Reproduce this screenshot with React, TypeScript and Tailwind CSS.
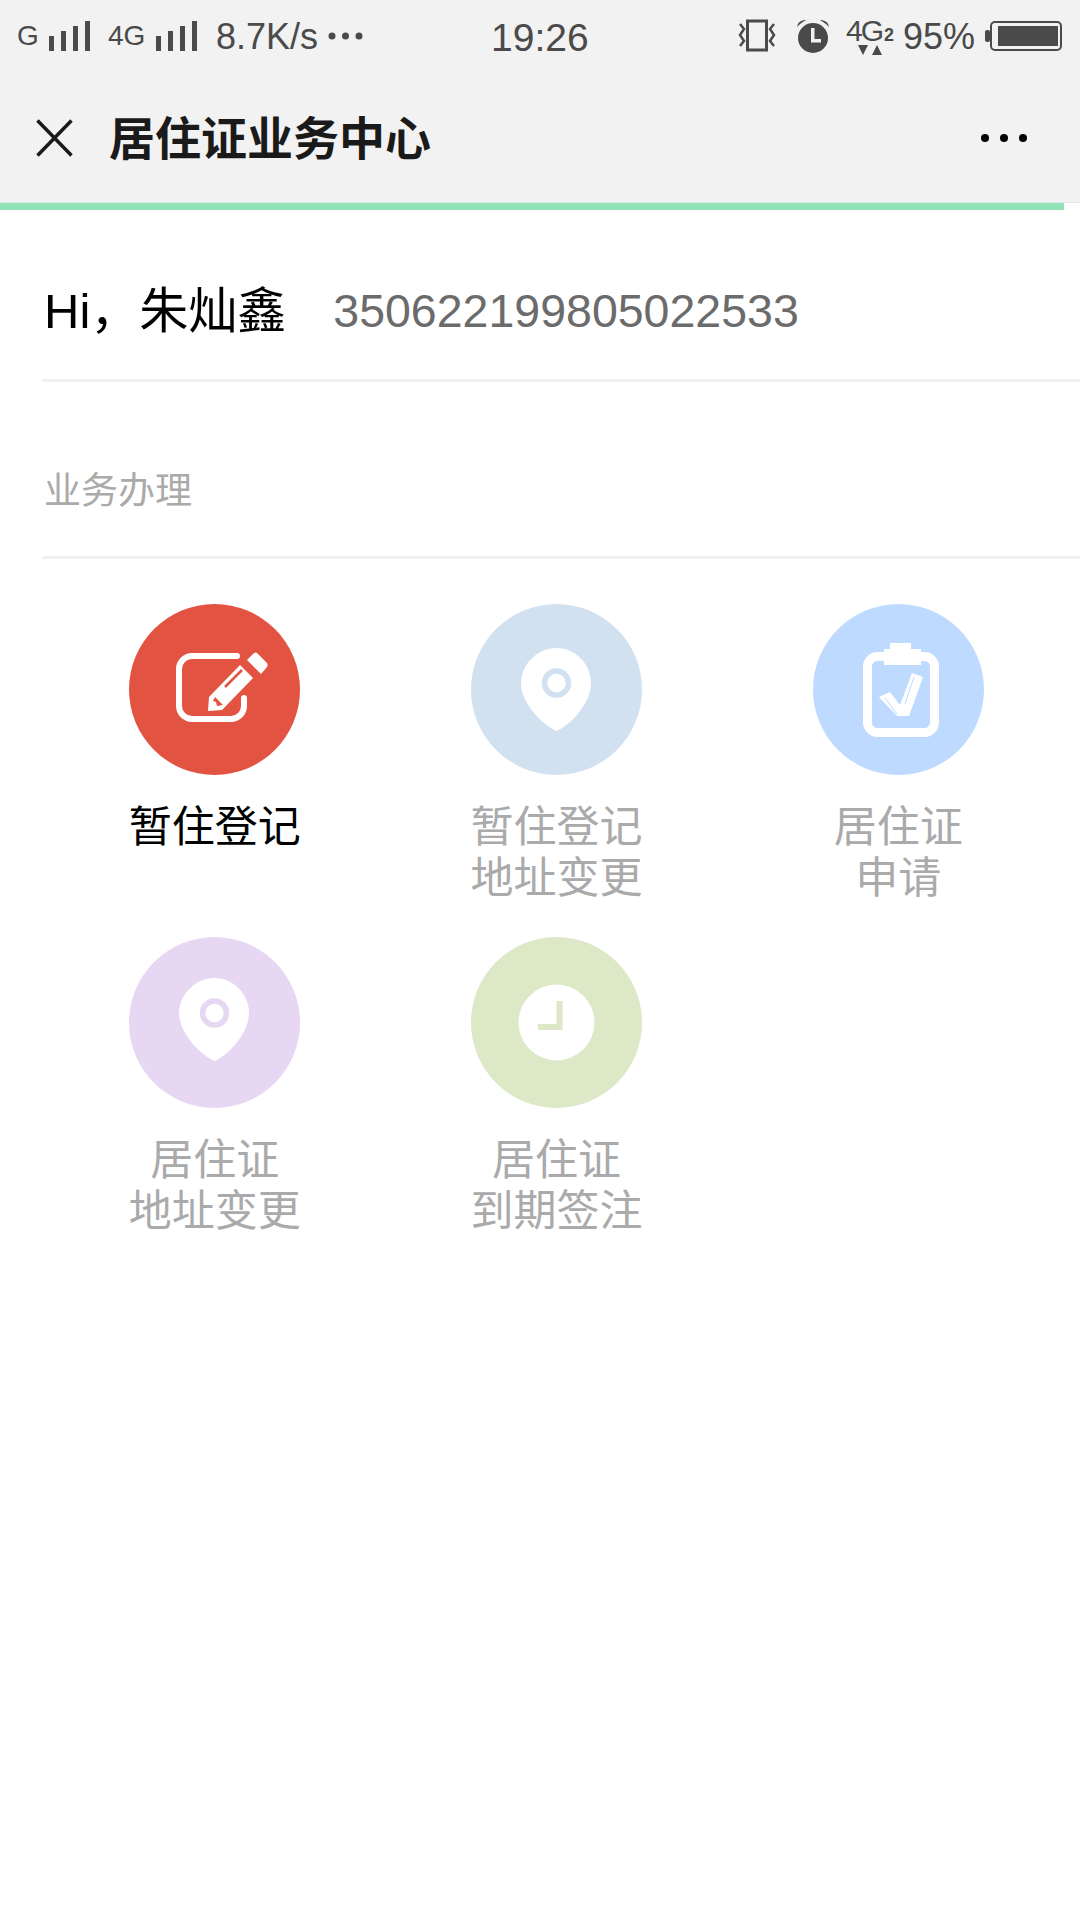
const cjk = "font-['Liberation_Sans','Noto_Sans_CJK_SC',sans-serif]"

function Signal() {
  return (
    <svg width="41" height="32" viewBox="0 0 41 32" className="block">
      <rect x="0" y="16" width="5" height="15" fill="#4a4a4a" />
      <rect x="12" y="11" width="5" height="20" fill="#4a4a4a" />
      <rect x="24" y="6" width="5" height="25" fill="#4a4a4a" />
      <rect x="36" y="1" width="5" height="30" fill="#4a4a4a" />
    </svg>
  )
}

function StatusBar() {
  return (
    <div className="h-[70px] pt-[2px] flex items-center text-[#4a4a4a] font-['Liberation_Sans',sans-serif]">
      <span className="ml-[17px] w-[20px] text-[28px] leading-none">G</span>
      <span className="ml-[12px]"><Signal /></span>
      <span className="ml-[18px] w-[37px] text-[28px] leading-none">4G</span>
      <span className="ml-[11px]"><Signal /></span>
      <span className="ml-[19px] w-[102px] text-[36px] leading-none whitespace-nowrap mt-[2px]">8.7K/s</span>
      <svg width="35" height="10" viewBox="0 0 35 10" className="ml-[10px]">
        <circle cx="4" cy="5" r="3.500" fill="#4a4a4a" />
        <circle cx="17.500" cy="5" r="3.500" fill="#4a4a4a" />
        <circle cx="31" cy="5" r="3.500" fill="#4a4a4a" />
      </svg>
      <span className="ml-[128px] w-[99px] text-[39px] leading-none mt-[2px]">19:26</span>
      {/* vibrate */}
      <svg width="38" height="34" viewBox="0 0 38 34" className="ml-[148px]">
        <rect x="9.500" y="2" width="19" height="29" fill="none" stroke="#4a4a4a" strokeWidth="3" />
        <path d="M2 5l4 5-4 6 4 6-4 5M36 5l-4 5 4 6-4 6 4 5" fill="none" stroke="#4a4a4a" strokeWidth="2.500" />
      </svg>
      {/* alarm */}
      <svg width="34" height="34" viewBox="0 0 34 34" className="ml-[20px]">
        <circle cx="17" cy="19" r="15" fill="#4a4a4a" />
        <path d="M1 8C2 3 5 1 10 1 6 3 3 6 1 8zM33 8C32 3 29 1 24 1 28 3 31 6 33 8z" fill="#4a4a4a" />
        <path d="M15 9h3.500v11H25v3.500H15z" fill="#f2f2f2" />
      </svg>
      <div className="ml-[16px] w-[48px] h-[40px] relative">
        <span className="absolute left-0 top-0 text-[30px] leading-[30px] tracking-[-2px]">4G</span>
        <span className="absolute left-[38px] top-[10px] text-[18px] leading-[18px] font-bold">2</span>
        <svg width="24" height="11" viewBox="0 0 24 11" className="absolute left-[12px] top-[29px]">
          <path d="M0 0h10L5 10zM14 10h10L19 0z" fill="#4a4a4a" />
        </svg>
      </div>
      <span className="ml-[9px] w-[72px] text-[36px] leading-none whitespace-nowrap mt-[2px]">95%</span>
      {/* battery */}
      <svg width="77" height="32" viewBox="0 0 77 32" className="ml-[10px]">
        <rect x="0" y="10" width="5" height="12" rx="2" fill="#4a4a4a" />
        <rect x="6" y="2" width="70" height="28" rx="4" fill="none" stroke="#4a4a4a" strokeWidth="2" />
        <rect x="13" y="6" width="60" height="20" fill="#4a4a4a" />
      </svg>
    </div>
  )
}

function NavBar() {
  return (
    <div className="h-[132px] flex items-center">
      <svg width="37" height="38" viewBox="0 0 37 38" className="ml-[36px] mt-[4px]">
        <path d="M1.500 1.500l34 35M35.500 1.500l-34 35" stroke="#1a1a1a" strokeWidth="3.500" fill="none" />
      </svg>
      <h1 className={`ml-[36px] text-[46px] leading-none font-bold text-[#1a1a1a] mt-[6px] ${cjk}`}>居住证业务中心</h1>
      <div className="ml-auto mr-[53px] flex gap-[11px] mt-[3px]">
        <span className="w-[8px] h-[8px] rounded-full bg-black" />
        <span className="w-[8px] h-[8px] rounded-full bg-black" />
        <span className="w-[8px] h-[8px] rounded-full bg-black" />
      </div>
    </div>
  )
}

type IconProps = { color: string; shift?: number }

function EditIcon({ color }: IconProps) {
  return (
    <svg width="171" height="171" viewBox="0 0 171 171">
      <path d="M108 52H63a13 13 0 0 0-13 13V102a13 13 0 0 0 13 13H102a13 13 0 0 0 13-13V94" fill="none" stroke="#fff" strokeWidth="6" strokeLinecap="round" />
      <path d="M80 93L111 61 124 74 93 106 79 107z" fill="#fff" />
      <path d="M118 56l7-7q2-1 3 0l10 10q1 2 0 4l-6 7z" fill="#fff" />
      <path d="M96 83l17-17" stroke={color} strokeWidth="2.500" />
      <path d="M86 93l8 8-6 1-1-4-3-1z" fill={color} />
    </svg>
  )
}

function PinIcon({ color, shift = 0 }: IconProps) {
  return (
    <svg width="171" height="171" viewBox="0 0 171 171">
      <g transform={`translate(0 ${shift})`}>
        <path d="M85.500 44C104 44 120 60 120 79 120 100 98 122 85.500 127 73 122 50 100 50 79 50 60 67 44 85.500 44z" fill="#fff" />
        <circle cx="85.500" cy="79" r="12" fill="none" stroke={color} strokeWidth="5.500" />
      </g>
    </svg>
  )
}

function ClipboardIcon({ color }: IconProps) {
  return (
    <svg width="171" height="171" viewBox="0 0 171 171">
      <rect x="54.500" y="52.500" width="67" height="76" rx="10" fill="none" stroke="#fff" strokeWidth="9" />
      <path d="M71 61V45H77V39H98V45H108V61z" fill="#fff" />
      <path d="M66 93L77 88 87 101 99 69 110 73 96 112H84z" fill="#fff" />
      <path d="M72 94L84 110M92 100L101 73" stroke={color} strokeWidth="1" />
    </svg>
  )
}

function ClockIcon({ color }: IconProps) {
  return (
    <svg width="171" height="171" viewBox="0 0 171 171">
      <circle cx="85.500" cy="85.500" r="38" fill="#fff" />
      <path d="M85.500 64H91.500V93H67V87H85.500z" fill={color} />
    </svg>
  )
}

const services = [
  { lines: ['暂住登记'], bg: 'bg-[#e25441]', color: '#e25441', text: 'text-black', icon: EditIcon, shift: 0 },
  { lines: ['暂住登记', '地址变更'], bg: 'bg-[#d2e1f0]', color: '#d2e1f0', text: 'text-[#aaaaaa]', icon: PinIcon, shift: 0 },
  { lines: ['居住证', '申请'], bg: 'bg-[#bedafe]', color: '#bedafe', text: 'text-[#aaaaaa]', icon: ClipboardIcon, shift: 0 },
  { lines: ['居住证', '地址变更'], bg: 'bg-[#e7d7f2]', color: '#e7d7f2', text: 'text-[#aaaaaa]', icon: PinIcon, shift: -3 },
  { lines: ['居住证', '到期签注'], bg: 'bg-[#dde8c6]', color: '#dde8c6', text: 'text-[#aaaaaa]', icon: ClockIcon, shift: 0 },
]

export default function App() {
  return (
    <div className={`w-[1080px] h-[1920px] bg-white overflow-hidden ${cjk}`}>
      <header className="bg-[#f2f2f2] border-b border-[#e6e6e6] h-[203px]">
        <StatusBar />
        <NavBar />
      </header>
      <div className="w-[1064px] h-[7px] bg-[#8fe3b6]" />

      <div className="ml-[42px] h-[172px] border-b-[3px] border-[#f0f0f0] flex items-center pt-[33px]">
        <span className="ml-[2px] text-[49px] leading-none text-black whitespace-nowrap">Hi，朱灿鑫</span>
        <span className="ml-[47px] text-[46.500px] leading-none text-[#6b6b6b]">350622199805022533</span>
      </div>

      <div className="ml-[42px] h-[177px] border-b-[3px] border-[#f0f0f0] flex items-center pt-[44px]">
        <span className="ml-[2px] text-[37px] leading-none text-[#aaaaaa]">业务办理</span>
      </div>

      <div className="ml-[44px] w-[1025px] grid grid-cols-3 pt-[45px]">
        {services.map((s, i) => (
          <div key={i} className="h-[333px] flex flex-col items-center">
            <div className={`w-[171px] h-[171px] rounded-full ${s.bg}`}>
              <s.icon color={s.color} shift={s.shift} />
            </div>
            <div className={`mt-[27px] text-[43px] leading-[51px] text-center ${s.text}`}>
              {s.lines.map((l) => (
                <div key={l}>{l}</div>
              ))}
            </div>
          </div>
        ))}
      </div>
    </div>
  )
}
